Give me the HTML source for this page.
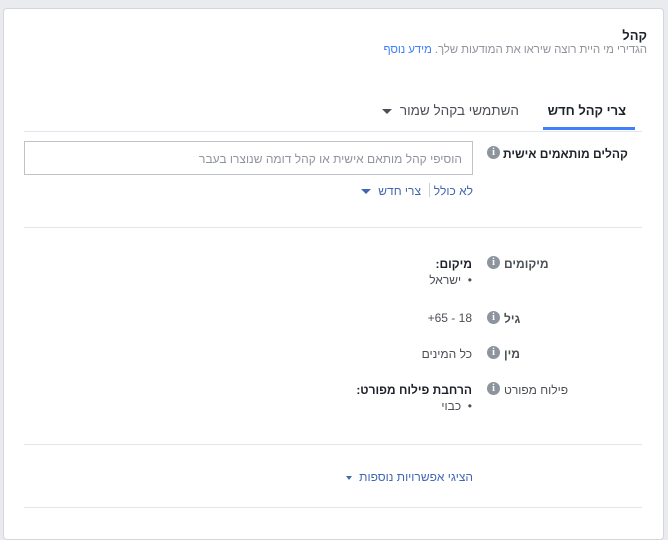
<!DOCTYPE html>
<html><head><meta charset="utf-8"><style>
body{margin:0;width:668px;height:525px;background:#e9ebee;font-family:"Liberation Sans",Arial,sans-serif;font-size:12px;color:#1d2129;position:relative;overflow:hidden}
.card{position:absolute;left:3px;top:8px;width:659px;height:530px;background:#fff;border:1px solid #d3d6db;border-radius:4px}
.a{position:absolute;direction:rtl;white-space:nowrap}
.hr{position:absolute;left:24px;width:618px;height:1px;background:#e5e6e9}
.i{position:absolute;width:13px;height:13px;border-radius:50%;background:#8d949e;color:#fff;font-size:10px;font-weight:bold;text-align:center;line-height:13px;font-family:"Liberation Serif",serif}
.lbl{left:504px;color:#4b4f56;font-weight:bold}
.val{right:196px;color:#4b4f56}
.blue{color:#4267b2}
.tri{display:inline-block;width:0;height:0;border-left:5px solid transparent;border-right:5px solid transparent;border-top:5px solid currentColor;vertical-align:middle;margin-right:4px}
</style></head><body>
<div class="card"></div>
<div class="a" style="right:21px;top:28px;font-size:13px;font-weight:bold">קהל</div>
<div class="a" style="right:21px;top:44px;color:#90949c;font-size:11.5px;letter-spacing:-0.1px">הגדירי מי היית רוצה שיראו את המודעות שלך. <span style="color:#4080ff">מידע נוסף</span></div>
<div class="a" style="right:42px;top:103px;font-size:13px;font-weight:bold;color:#1d2129">צרי קהל חדש</div>
<div style="position:absolute;left:543px;top:127px;width:92px;height:3px;background:#4080ff"></div>
<div class="a" style="right:149px;top:103px;font-size:13.5px;color:#4b4f56">השתמשי בקהל שמור <span class="tri" style="color:#4b4f56"></span></div>
<div class="hr" style="top:131px"></div>
<div class="a lbl" style="top:147px;left:503px;color:#1d2129">קהלים מותאמים אישית</div>
<div class="i" style="left:487px;top:146px">i</div>
<div style="position:absolute;left:24px;top:141px;width:447px;height:32px;border:1px solid #bec3c9"></div>
<div class="a" style="right:206px;top:152px;color:#90949c">הוסיפי קהל מותאם אישית או קהל דומה שנוצרו בעבר</div>
<div class="a blue" style="right:195px;top:184px">לא כולל</div>
<div style="position:absolute;left:429px;top:183px;width:1px;height:14px;background:#ccd0d5"></div>
<div class="a blue" style="right:247px;top:184px">צרי חדש <span class="tri"></span></div>
<div class="hr" style="top:227px"></div>
<div class="a lbl" style="top:257px">מיקומים</div>
<div class="i" style="left:487px;top:256px">i</div>
<div class="a val" style="top:257px;font-weight:bold;color:#1d2129">מיקום:</div>
<div class="a val" style="top:273px">• &nbsp;ישראל</div>
<div class="a lbl" style="top:312px">גיל</div>
<div class="i" style="left:487px;top:311px">i</div>
<div class="a val" style="top:311px">18 - 65+</div>
<div class="a lbl" style="top:347px">מין</div>
<div class="i" style="left:487px;top:346px">i</div>
<div class="a val" style="top:347px">כל המינים</div>
<div class="a lbl" style="top:383px;font-weight:normal">פילוח מפורט</div>
<div class="i" style="left:487px;top:382px">i</div>
<div class="a val" style="top:383px;font-weight:bold;color:#1d2129">הרחבת פילוח מפורט:</div>
<div class="a val" style="top:399px">• &nbsp;כבוי</div>
<div class="hr" style="top:444px"></div>
<div class="a blue" style="right:195px;top:470px">הציגי אפשרויות נוספות <span class="tri" style="border-width:4px 3px 0 3px"></span></div>
<div class="hr" style="top:507px"></div>
</body></html>
